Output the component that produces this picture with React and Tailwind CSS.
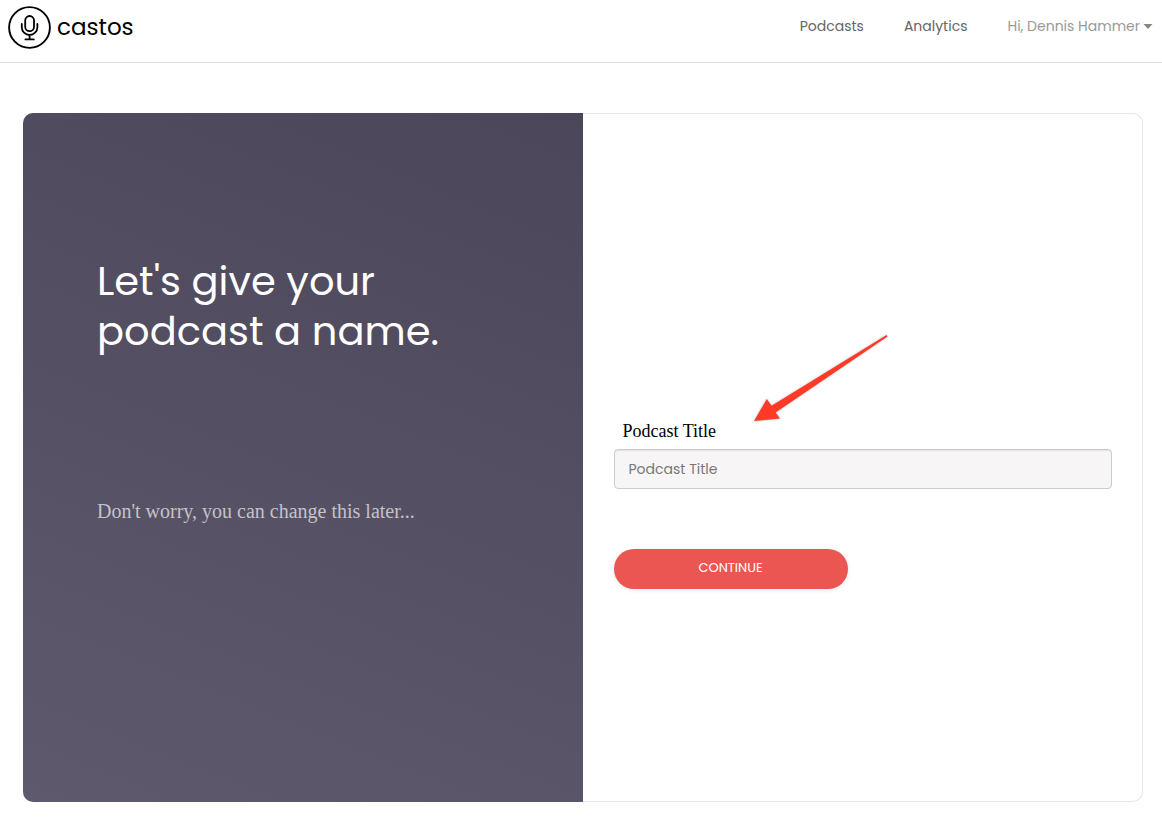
const sans = "font-[Poppins,Inter,sans-serif]";
const serif = "font-['Liberation_Serif',serif]";

function Logo() {
  return (
    <a href="#" aria-label="castos" className="flex items-center gap-[5px]">
      <svg viewBox="0 0 44 44" className="size-11" fill="none" stroke="#000" aria-hidden="true">
        <circle cx="21.5" cy="21.5" r="20.4" strokeWidth="1.9" />
        <rect x="17.2" y="10" width="8.8" height="15.2" rx="4.4" strokeWidth="1.8" />
        <path d="M13.8 18v3.2a7.8 7.8 0 0 0 15.6 0V18M21.6 29v4.2M17.4 33.4h8.4" strokeWidth="1.8" strokeLinecap="round" />
      </svg>
      <span className="pb-[2px] text-[23px] leading-8 text-black">castos</span>
    </a>
  );
}

function Arrow() {
  return (
    <svg
      viewBox="0 0 140 92"
      aria-hidden="true"
      className="pointer-events-none absolute -top-[85px] left-[137px] h-[92px] w-[140px] drop-shadow-[0_0_1px_rgba(0,0,0,0.3)]"
    >
      <path d="M3 87 15.8 65 20.6 71.8 135.5 1 136.5 2.4 24.6 78.4 29 84.6Z" fill="#ff3b28" />
    </svg>
  );
}

export default function App() {
  return (
    <div className={`min-h-screen bg-white ${sans}`}>
      <header className="flex h-[63px] items-start justify-between border-b border-[#e3e3e3] pt-[6px] pr-[9px] pl-2">
        <Logo />
        <nav className="flex gap-10 pt-[9px] text-sm leading-[22px] text-[#666]">
          <a href="#">Podcasts</a>
          <a href="#">Analytics</a>
          <button type="button" className="flex items-center gap-[3px] text-[#999]">
            Hi, Dennis Hammer
            <svg viewBox="0 0 10 5" className="h-[5px] w-[10px]" fill="#888" aria-hidden="true">
              <path d="M0.5 0h9L5 5z" />
            </svg>
          </button>
        </nav>
      </header>

      <main className="pt-[50px] pr-[19px] pb-[19px] pl-[23px]">
        <div className="grid grid-cols-2 rounded-[10px] border border-l-0 border-[#e6e6e8]">
          <section className="-my-px rounded-l-[10px] bg-linear-[22deg,#5e596c,#4b4659] px-[74px] pt-[143px] pb-[279px]">
            <h1 className="max-w-[360px] text-[40px] leading-[50px] text-white">
              Let's give your podcast a name.
            </h1>
            <p className={`mt-[143px] text-[20px] leading-6 text-[#c5c2ca] ${serif}`}>
              Don't worry, you can change this later...
            </p>
          </section>

          <form className="pt-[305px] pr-[30px] pl-[31px]" onSubmit={(e) => e.preventDefault()}>
            <div className="relative">
              <Arrow />
              <label htmlFor="title" className={`block pl-[9px] text-lg leading-6 text-black ${serif}`}>
                Podcast Title
              </label>
              <input
                id="title"
                type="text"
                placeholder="Podcast Title"
                className="mt-[6px] block h-10 w-full rounded-[4px] border border-[#ccc] bg-[#f7f5f6] px-[14px] text-sm text-[#555] shadow-[inset_0_1px_1px_rgba(0,0,0,0.08)] placeholder:text-[#777]"
              />
            </div>
            <button
              type="submit"
              className="mt-[60px] block h-10 w-[234px] rounded-full bg-[#eb5652] pb-[3px] text-[13px] text-white shadow-[0_1px_5px_rgba(0,0,0,0.1)]"
            >
              CONTINUE
            </button>
          </form>
        </div>
      </main>
    </div>
  );
}
